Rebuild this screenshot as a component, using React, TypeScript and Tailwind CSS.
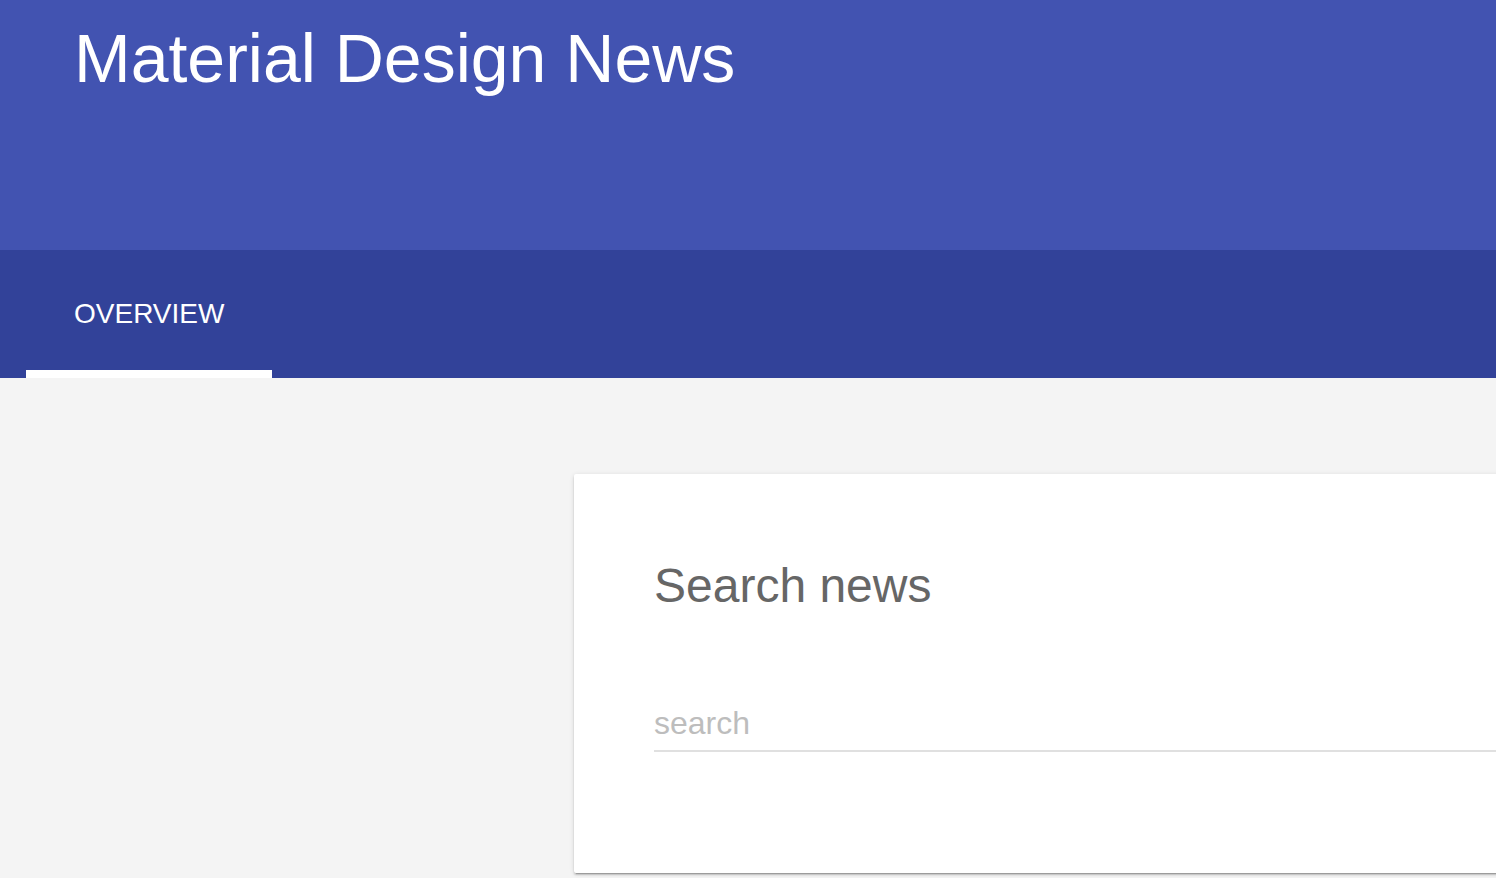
export default function App() {
    return (
        <div className="w-[1496px] h-[878px] overflow-hidden bg-[#f4f4f4] font-['Liberation_Sans',Arial,sans-serif]">
            <header className="h-[250px] bg-[#4253b1] pl-[74px] pt-[24px]">
                <h1 className="text-white text-[68px] leading-[68px] font-normal">Material Design News</h1>
            </header>

            <nav className="h-[128px] bg-[#324299] pl-[26px] flex">
                <div className="w-[246px] h-full flex flex-col">
                    <div className="flex-1 flex items-center pl-[48px] pt-[8px]">
                        <span className="text-white text-[28px] leading-[28px]">OVERVIEW</span>
                    </div>
                    <div className="h-[8px] bg-white" />
                </div>
            </nav>

            <main className="pt-[96px] pl-[574px]">
                <section className="w-[1100px] h-[399px] bg-white rounded-[2px] pl-[80px] pt-[88px] shadow-[0_2px_2px_rgba(0,0,0,0.14),0_3px_1px_-2px_rgba(0,0,0,0.2),0_1px_5px_rgba(0,0,0,0.12)]">
                    <h2 className="text-[#666666] text-[48px] leading-[48px] font-normal">Search news</h2>
                    <div className="mt-[97px] border-b-2 border-[#e0e0e0] pb-[9px]">
                        <input
                            type="text"
                            placeholder="search"
                            className="w-full bg-transparent outline-none text-[32px] leading-[32px] h-[32px] text-[#555] placeholder:text-[#bdbdbd]"
                        />
                    </div>
                </section>
            </main>
        </div>
    )
}
